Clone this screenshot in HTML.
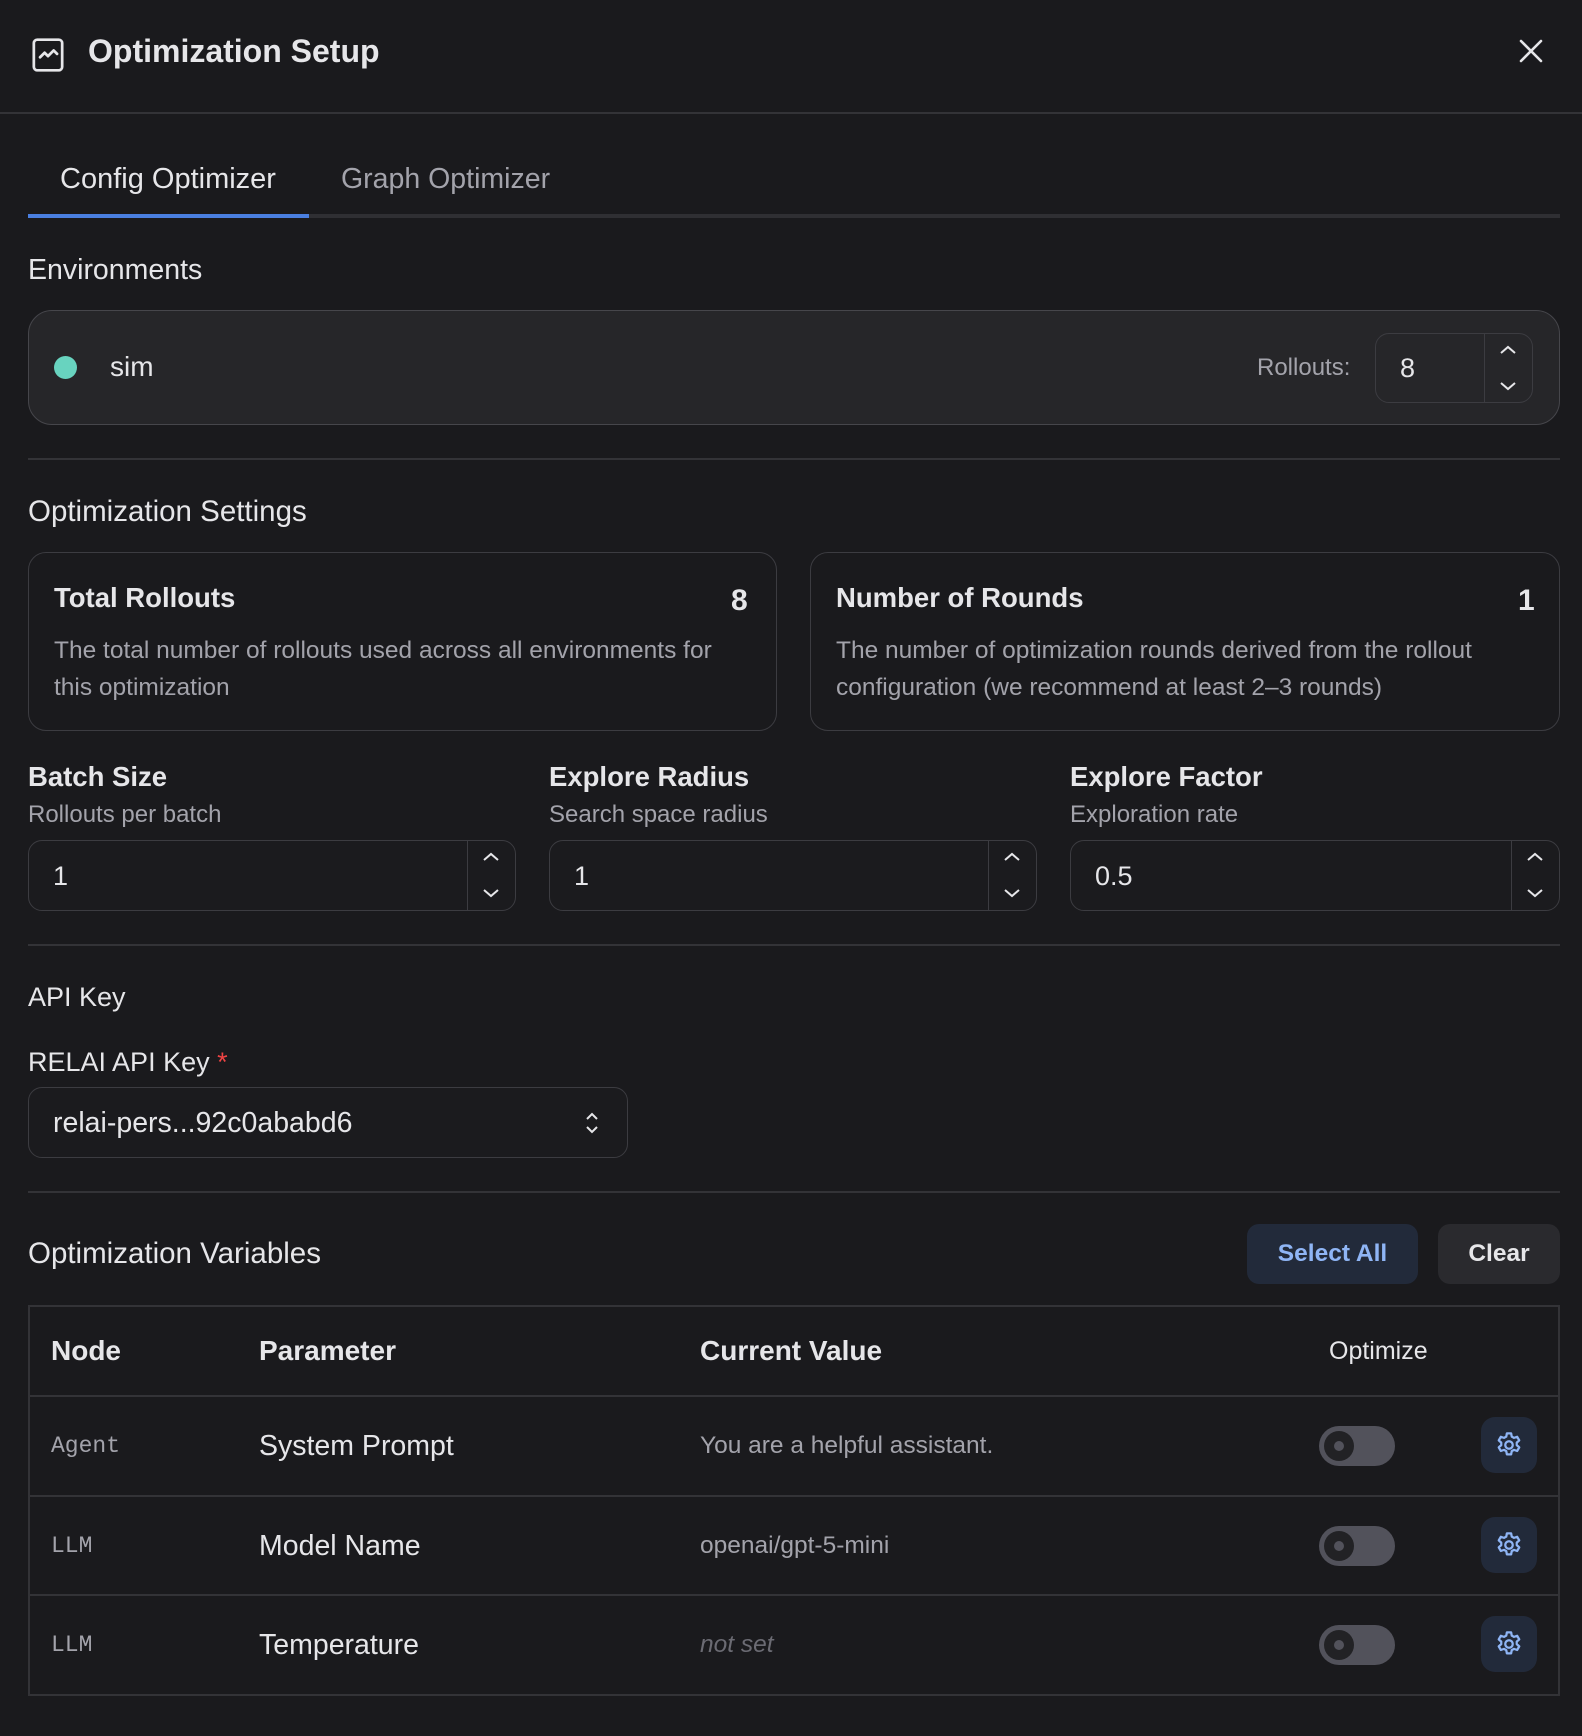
<!DOCTYPE html>
<html><head><meta charset="utf-8"><style>
*{box-sizing:border-box;margin:0;padding:0}
body{width:1582px;height:1736px;background:#1a1a1d;color:#e6e6e9;font-family:"Liberation Sans",sans-serif;position:relative;overflow:hidden}
.a{position:absolute;white-space:nowrap}
.hr{position:absolute;left:28px;width:1532px;height:2px;background:#333337}
.muted{color:#a3a3ab}
.inp{position:absolute;border:1.5px solid #3c3c41;border-radius:14px;background:#1b1b1e}
.spin{position:absolute;right:0;top:0;bottom:0;width:48px;border-left:1.5px solid #3c3c41}
.spin svg{position:absolute;left:14px}
.card{position:absolute;border:1.5px solid #3c3c41;border-radius:18px}
.tog{position:absolute;width:76px;height:40px;border-radius:20px;background:#52525b}
.tog::before{content:"";position:absolute;left:5px;top:5px;width:30px;height:30px;border-radius:50%;background:#222225}
.tog::after{content:"";position:absolute;left:15px;top:15px;width:10px;height:10px;border-radius:50%;background:#52525b}
.gear{position:absolute;width:56px;height:56px;border-radius:14px;background:#222a3a}
.gear svg{position:absolute;left:13px;top:13px}
</style></head><body>
<svg class="a" style="left:32px;top:38px" width="32" height="34" viewBox="0 0 28 30" fill="none" stroke="#e6e6e9" stroke-width="2.4" stroke-linecap="round" stroke-linejoin="round"><rect x="1.5" y="1.5" width="25" height="27" rx="3"/><path d="M7 17l4-4 3 3 5-5 3 3"/></svg>
<div class="a" style="left:88px;top:33px;font-size:32px;font-weight:bold">Optimization Setup</div>
<svg class="a" style="left:1518px;top:38px" width="26" height="26" viewBox="0 0 26 26" stroke="#e6e6e9" stroke-width="2.6" stroke-linecap="round"><path d="M3 3l20 20M23 3L3 23"/></svg>
<div class="a" style="left:0;top:112px;width:1582px;height:2px;background:#333337"></div>

<div class="a" style="left:60px;top:163px;font-size:29px">Config Optimizer</div>
<div class="a muted" style="left:341px;top:163px;font-size:28.5px">Graph Optimizer</div>
<div class="a" style="left:28px;top:214px;width:1532px;height:4px;background:#2f2f33"></div>
<div class="a" style="left:28px;top:214px;width:281px;height:4px;background:#4a7fe0"></div>

<div class="a" style="left:28px;top:254px;font-size:28.5px">Environments</div>
<div class="card" style="left:28px;top:310px;width:1532px;height:115px;border-radius:24px;background:#262629;border-color:#46464b"></div>
<div class="a" style="left:54px;top:356px;width:23px;height:23px;border-radius:50%;background:#68d3bf"></div>
<div class="a" style="left:110px;top:351px;font-size:28px">sim</div>
<div class="a muted" style="left:1257px;top:354px;font-size:24px">Rollouts:</div>
<div class="inp" style="left:1375px;top:333px;width:158px;height:70px;background:#262629">
<div class="a" style="left:24px;top:19px;font-size:27px">8</div>
<div class="spin"><svg style="top:10px" width="18" height="12" viewBox="0 0 18 12" fill="none" stroke="#e6e6e9" stroke-width="2"><path d="M2 9l7-6 7 6"/></svg><svg style="top:46px" width="18" height="12" viewBox="0 0 18 12" fill="none" stroke="#e6e6e9" stroke-width="2"><path d="M2 3l7 6 7-6"/></svg></div></div>

<div class="hr" style="top:458px"></div>
<div class="a" style="left:28px;top:495px;font-size:29.5px">Optimization Settings</div>
<div class="card" style="left:28px;top:552px;width:749px;height:179px"></div>
<div class="a" style="left:54px;top:582px;font-size:27.5px;font-weight:bold">Total Rollouts</div>
<div class="a" style="left:731px;top:584px;font-size:30px;font-weight:bold">8</div>
<div class="a muted" style="left:54px;top:632px;font-size:24.5px;line-height:37px">The total number of rollouts used across all environments for<br>this optimization</div>
<div class="card" style="left:810px;top:552px;width:750px;height:179px"></div>
<div class="a" style="left:836px;top:582px;font-size:27.5px;font-weight:bold">Number of Rounds</div>
<div class="a" style="left:1518px;top:584px;font-size:30px;font-weight:bold">1</div>
<div class="a muted" style="left:836px;top:632px;font-size:24.5px;line-height:37px">The number of optimization rounds derived from the rollout<br>configuration (we recommend at least 2–3 rounds)</div>

<div class="a" style="left:28px;top:761px;font-size:27.5px;font-weight:bold">Batch Size</div>
<div class="a muted" style="left:28px;top:801px;font-size:24px">Rollouts per batch</div>
<div class="a" style="left:549px;top:761px;font-size:27.5px;font-weight:bold">Explore Radius</div>
<div class="a muted" style="left:549px;top:801px;font-size:24px">Search space radius</div>
<div class="a" style="left:1070px;top:761px;font-size:27.5px;font-weight:bold">Explore Factor</div>
<div class="a muted" style="left:1070px;top:801px;font-size:24px">Exploration rate</div>
<div class="inp" style="left:28px;top:840px;width:488px;height:71px"><div class="a" style="left:24px;top:20px;font-size:27px">1</div><div class="spin"><svg style="top:10px" width="18" height="12" viewBox="0 0 18 12" fill="none" stroke="#e6e6e9" stroke-width="2"><path d="M2 9l7-6 7 6"/></svg><svg style="top:46px" width="18" height="12" viewBox="0 0 18 12" fill="none" stroke="#e6e6e9" stroke-width="2"><path d="M2 3l7 6 7-6"/></svg></div></div>
<div class="inp" style="left:549px;top:840px;width:488px;height:71px"><div class="a" style="left:24px;top:20px;font-size:27px">1</div><div class="spin"><svg style="top:10px" width="18" height="12" viewBox="0 0 18 12" fill="none" stroke="#e6e6e9" stroke-width="2"><path d="M2 9l7-6 7 6"/></svg><svg style="top:46px" width="18" height="12" viewBox="0 0 18 12" fill="none" stroke="#e6e6e9" stroke-width="2"><path d="M2 3l7 6 7-6"/></svg></div></div>
<div class="inp" style="left:1070px;top:840px;width:490px;height:71px"><div class="a" style="left:24px;top:20px;font-size:27px">0.5</div><div class="spin"><svg style="top:10px" width="18" height="12" viewBox="0 0 18 12" fill="none" stroke="#e6e6e9" stroke-width="2"><path d="M2 9l7-6 7 6"/></svg><svg style="top:46px" width="18" height="12" viewBox="0 0 18 12" fill="none" stroke="#e6e6e9" stroke-width="2"><path d="M2 3l7 6 7-6"/></svg></div></div>

<div class="hr" style="top:944px"></div>
<div class="a" style="left:28px;top:982px;font-size:27px">API Key</div>
<div class="a" style="left:28px;top:1047px;font-size:27px">RELAI API Key <span style="color:#ef4444">*</span></div>
<div class="inp" style="left:28px;top:1087px;width:600px;height:71px"><div class="a" style="left:24px;top:19px;font-size:28.5px">relai-pers...92c0ababd6</div>
<svg class="a" style="left:555px;top:23px" width="16" height="24" viewBox="0 0 16 24" fill="none" stroke="#e6e6e9" stroke-width="2"><path d="M3 8l5-5 5 5M3 16l5 5 5-5"/></svg></div>

<div class="hr" style="top:1191px"></div>
<div class="a" style="left:28px;top:1237px;font-size:29.5px">Optimization Variables</div>
<div class="a" style="left:1247px;top:1224px;width:171px;height:60px;border-radius:12px;background:#222a3a;color:#8fb5f5;font-size:24.5px;font-weight:bold;text-align:center;line-height:60px">Select All</div>
<div class="a" style="left:1438px;top:1224px;width:122px;height:60px;border-radius:12px;background:#2a2a2e;font-size:24.5px;font-weight:bold;text-align:center;line-height:60px">Clear</div>

<div class="a" style="left:28px;top:1305px;width:1532px;height:391px;border:2px solid #333337"></div>
<div class="hr" style="top:1395px"></div>
<div class="hr" style="top:1495px"></div>
<div class="hr" style="top:1594px"></div>
<div class="a" style="left:51px;top:1335px;font-size:28px;font-weight:bold">Node</div>
<div class="a" style="left:259px;top:1335px;font-size:28px;font-weight:bold">Parameter</div>
<div class="a" style="left:700px;top:1335px;font-size:28px;font-weight:bold">Current Value</div>
<div class="a" style="left:1329px;top:1337px;font-size:25px">Optimize</div>

<div class="a muted" style="left:51px;top:1433px;font-size:23px;font-family:'Liberation Mono',monospace">Agent</div>
<div class="a" style="left:259px;top:1430px;font-size:28.5px">System Prompt</div>
<div class="a muted" style="left:700px;top:1432px;font-size:24.5px">You are a helpful assistant.</div>
<div class="tog" style="left:1319px;top:1426px"></div>
<div class="gear" style="left:1481px;top:1417px"><svg width="30" height="30" viewBox="0 0 24 24" fill="none" stroke="#8fb5f5" stroke-width="1.8" stroke-linejoin="round"><path d="M10.3 2.7h3.4l.5 2.6 1.8 1 2.5-.9 1.7 2.9-2 1.8v2l2 1.8-1.7 2.9-2.5-.9-1.8 1-.5 2.6h-3.4l-.5-2.6-1.8-1-2.5.9-1.7-2.9 2-1.8v-2l-2-1.8 1.7-2.9 2.5.9 1.8-1z"/><circle cx="12" cy="12" r="3"/></svg></div>

<div class="a muted" style="left:51px;top:1533px;font-size:23px;font-family:'Liberation Mono',monospace">LLM</div>
<div class="a" style="left:259px;top:1530px;font-size:28.5px">Model Name</div>
<div class="a muted" style="left:700px;top:1532px;font-size:24.5px">openai/gpt-5-mini</div>
<div class="tog" style="left:1319px;top:1526px"></div>
<div class="gear" style="left:1481px;top:1517px"><svg width="30" height="30" viewBox="0 0 24 24" fill="none" stroke="#8fb5f5" stroke-width="1.8" stroke-linejoin="round"><path d="M10.3 2.7h3.4l.5 2.6 1.8 1 2.5-.9 1.7 2.9-2 1.8v2l2 1.8-1.7 2.9-2.5-.9-1.8 1-.5 2.6h-3.4l-.5-2.6-1.8-1-2.5.9-1.7-2.9 2-1.8v-2l-2-1.8 1.7-2.9 2.5.9 1.8-1z"/><circle cx="12" cy="12" r="3"/></svg></div>

<div class="a muted" style="left:51px;top:1632px;font-size:23px;font-family:'Liberation Mono',monospace">LLM</div>
<div class="a" style="left:259px;top:1629px;font-size:28.5px">Temperature</div>
<div class="a" style="left:700px;top:1631px;font-size:24.5px;font-style:italic;color:#6b6b73">not set</div>
<div class="tog" style="left:1319px;top:1625px"></div>
<div class="gear" style="left:1481px;top:1616px"><svg width="30" height="30" viewBox="0 0 24 24" fill="none" stroke="#8fb5f5" stroke-width="1.8" stroke-linejoin="round"><path d="M10.3 2.7h3.4l.5 2.6 1.8 1 2.5-.9 1.7 2.9-2 1.8v2l2 1.8-1.7 2.9-2.5-.9-1.8 1-.5 2.6h-3.4l-.5-2.6-1.8-1-2.5.9-1.7-2.9 2-1.8v-2l-2-1.8 1.7-2.9 2.5.9 1.8-1z"/><circle cx="12" cy="12" r="3"/></svg></div>
</body></html>
